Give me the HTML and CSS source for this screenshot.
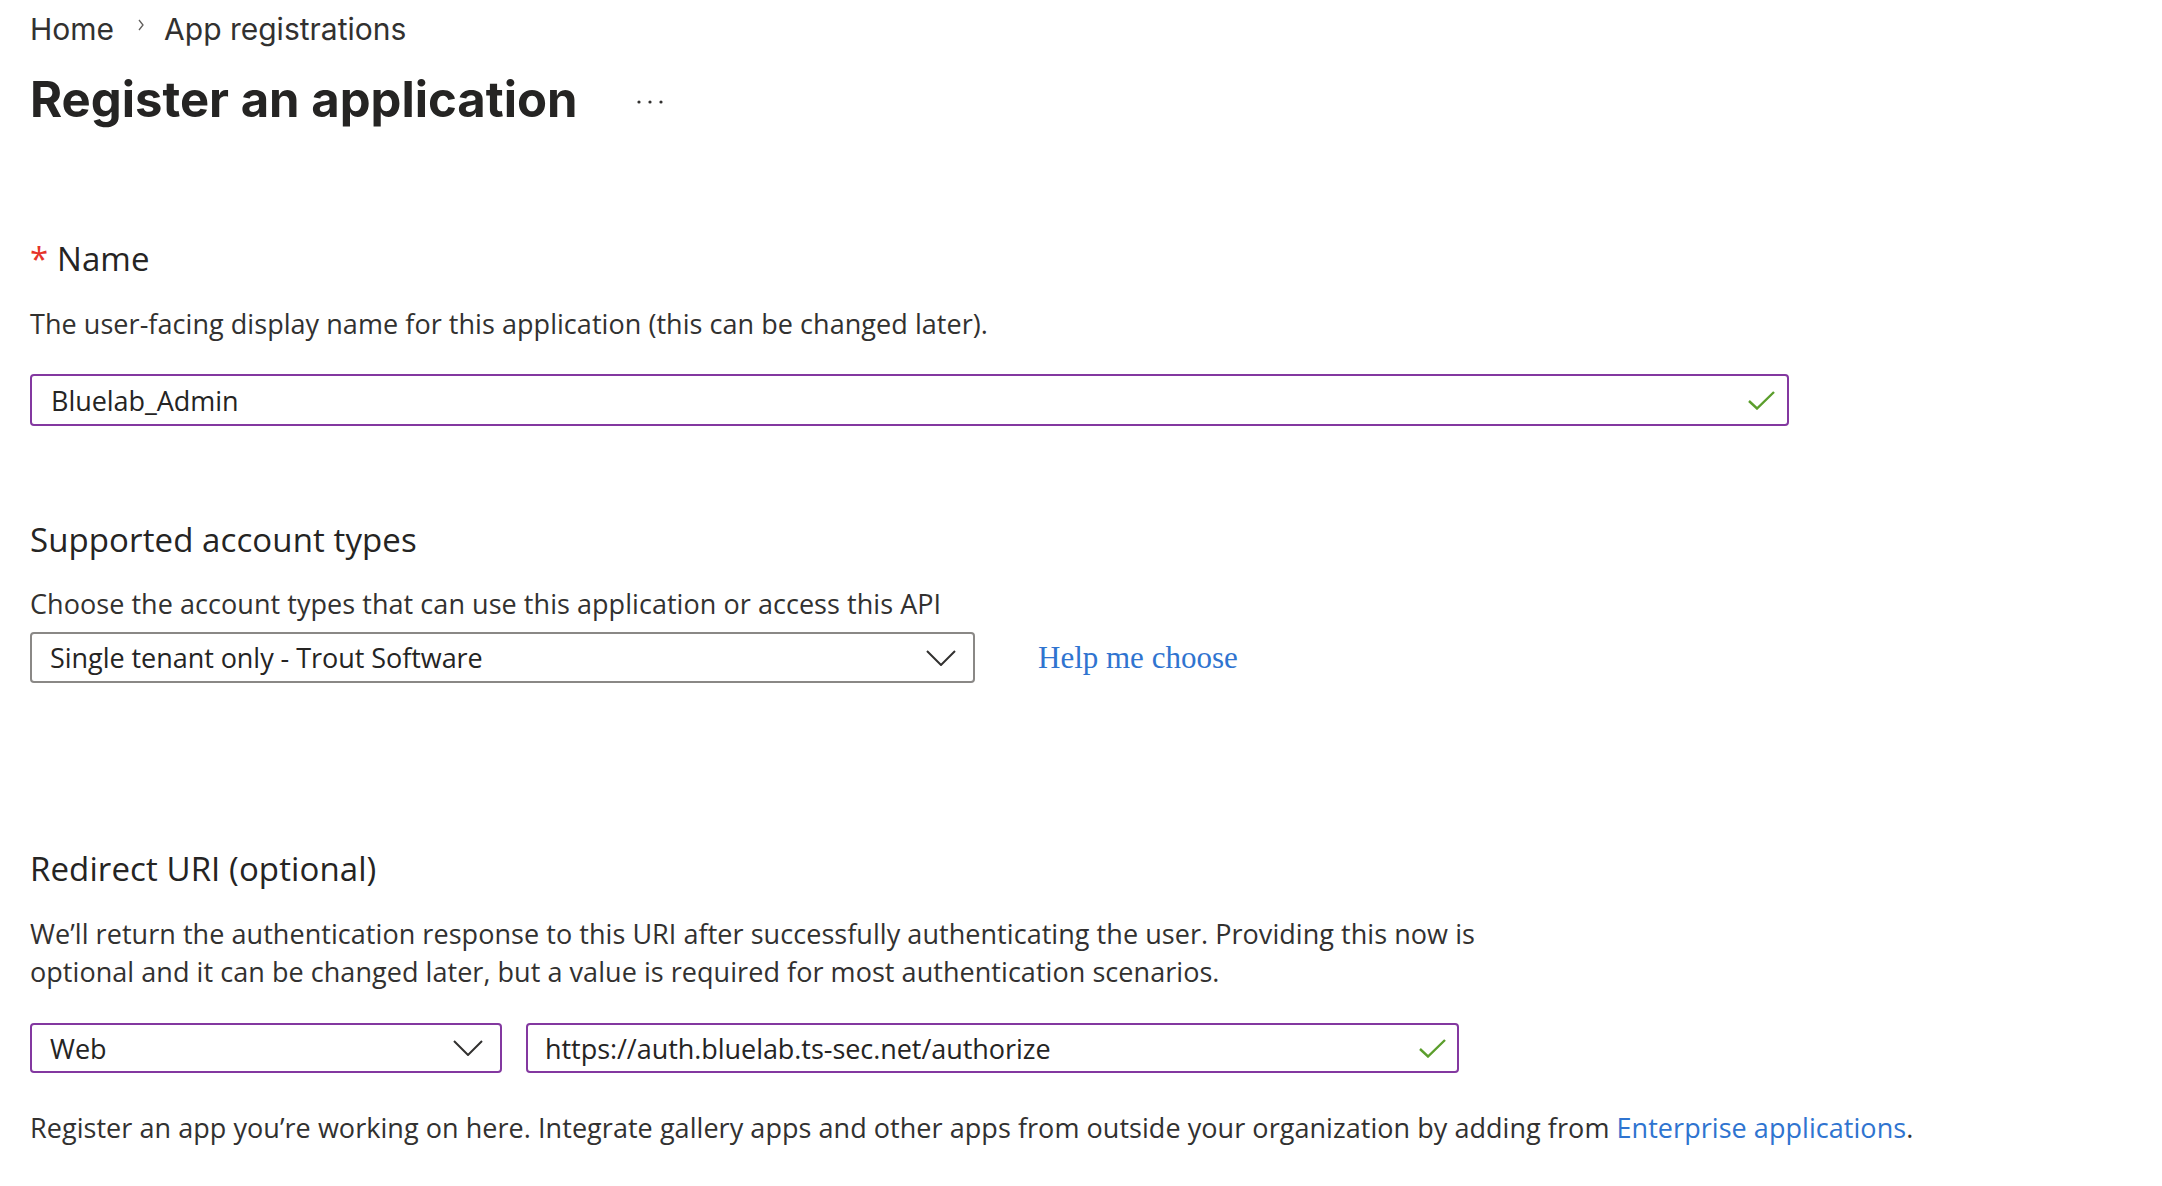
FILE: index.html
```html
<!DOCTYPE html>
<html lang="en">
<head>
<meta charset="utf-8">
<title>Register an application</title>
<link rel="stylesheet" href="styles.css">
</head>
<body>
<div class="page">
  <nav class="breadcrumb">
    <span class="crumb">Home</span>
    <svg class="crumb-sep" width="8" height="12" viewBox="0 0 8 12"><polyline points="2,1 6,6 2,11" fill="none" stroke="#605e5c" stroke-width="1.3"/></svg>
    <span class="crumb">App registrations</span>
  </nav>
  <div class="title-row">
    <h1 class="title">Register an application</h1>
    <svg class="more" width="28" height="6" viewBox="0 0 28 6"><circle cx="3" cy="3" r="1.6" fill="#323130"/><circle cx="14" cy="3" r="1.6" fill="#323130"/><circle cx="25" cy="3" r="1.6" fill="#323130"/></svg>
  </div>

  <h2 class="section-heading name-heading"><span class="req">*</span> Name</h2>
  <p class="desc">The user-facing display name for this application (this can be changed later).</p>
  <div class="field field-focus field-name">
    <span class="field-text">Bluelab_Admin</span>
    <svg class="check" width="27" height="19" viewBox="0 0 27 19"><polyline points="1,10 9,17.5 26,1" fill="none" stroke="#5b9e2c" stroke-width="2.4"/></svg>
  </div>

  <h2 class="section-heading supported-heading">Supported account types</h2>
  <p class="desc choose">Choose the account types that can use this application or access this API</p>
  <div class="select-row">
    <div class="field field-grey field-account">
      <span class="field-text">Single tenant only - Trout Software</span>
      <svg class="chevron" width="30" height="16" viewBox="0 0 30 16"><polyline points="1,1 15,15 29,1" fill="none" stroke="#323130" stroke-width="2"/></svg>
    </div>
    <a class="help-link" href="#">Help me choose</a>
  </div>

  <h2 class="section-heading redirect-heading">Redirect URI (optional)</h2>
  <p class="desc redirect-desc">We’ll return the authentication response to this URI after successfully authenticating the user. Providing this now is optional and it can be changed later, but a value is required for most authentication scenarios.</p>
  <div class="uri-row">
    <div class="field field-focus field-web">
      <span class="field-text">Web</span>
      <svg class="chevron" width="30" height="16" viewBox="0 0 30 16"><polyline points="1,1 15,15 29,1" fill="none" stroke="#323130" stroke-width="2"/></svg>
    </div>
    <div class="field field-focus field-uri">
      <span class="field-text">https://auth.bluelab.ts-sec.net/authorize</span>
      <svg class="check" width="27" height="19" viewBox="0 0 27 19"><polyline points="1,10 9,17.5 26,1" fill="none" stroke="#5b9e2c" stroke-width="2.4"/></svg>
    </div>
  </div>

  <p class="desc footer-note">Register an app you’re working on here. Integrate gallery apps and other apps from outside your organization by adding from <a class="link" href="#">Enterprise applications</a>.</p>
</div>
</body>
</html>
```

FILE: styles.css
```css
html, body {
  margin: 0;
  padding: 0;
  background: #ffffff;
}

.page {
  padding: 9px 0 0 30px;
  color: #323130;
  font-family: "Open Sans", "Noto Sans", sans-serif;
}

.breadcrumb {
  display: flex;
  align-items: center;
  height: 40px;
  font-family: Inter, Roboto, sans-serif;
  font-size: 30px;
  color: #323130;
}

.crumb-sep {
  margin: 0 19px 8px 23px;
}

.title-row {
  display: flex;
  align-items: center;
  margin-top: 21px;
  height: 60px;
}

.title {
  margin: 0;
  font-family: Inter, Roboto, sans-serif;
  font-weight: 700;
  font-size: 49px;
  line-height: 60px;
  color: #252423;
  letter-spacing: 0;
}

.more {
  margin-left: 58px;
  margin-top: 4px;
}

.section-heading {
  margin: 0;
  font-weight: 400;
  font-size: 33px;
  line-height: 40px;
  color: #252423;
  letter-spacing: 0.1px;
}

.req {
  color: #e5342a;
}

.name-heading {
  margin-top: 109px;
}

.desc {
  margin: 26px 0 0 0;
  font-size: 27px;
  line-height: 38px;
  letter-spacing: 0.05px;
}

.field {
  box-sizing: border-box;
  display: flex;
  align-items: center;
  justify-content: space-between;
  border-radius: 4px;
  font-size: 27px;
  letter-spacing: -0.05px;
  color: #252423;
}

.field-focus {
  border: 2px solid #8338a0;
}

.field-grey {
  border: 2px solid #8a8886;
}

.field-name {
  margin-top: 31px;
  width: 1759px;
  height: 52px;
  padding: 0 12px 0 19px;
}

.supported-heading {
  margin-top: 94px;
}

.choose {
  margin-top: 25px;
}

.select-row {
  display: flex;
  align-items: center;
  margin-top: 9px;
}

.field-account {
  width: 945px;
  height: 51px;
  padding: 0 17px 0 18px;
}

.help-link {
  margin-left: 63px;
  font-family: "Liberation Serif", "Times New Roman", serif;
  font-size: 31px;
  color: #2f74d0;
  text-decoration: none;
}

.redirect-heading {
  margin-top: 166px;
}

.redirect-desc {
  max-width: 1500px;
}

.uri-row {
  display: flex;
  gap: 24px;
  margin-top: 32px;
}

.field-web {
  width: 472px;
  height: 50px;
  padding: 0 17px 0 18px;
}

.field-uri {
  width: 933px;
  height: 50px;
  padding: 0 11px 0 17px;
}

.footer-note {
  margin-top: 36px;
}

.link {
  color: #2f74d0;
  text-decoration: none;
}
```
